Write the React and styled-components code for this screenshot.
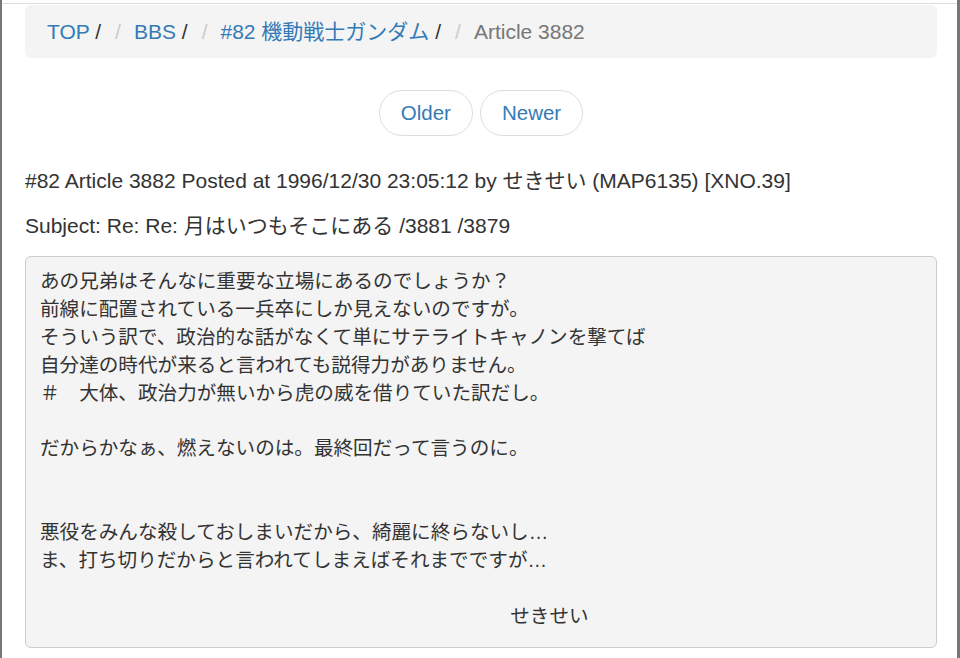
import React from "react";
import styled, {createGlobalStyle} from "styled-components";

const GlobalStyle = createGlobalStyle`
    html, body {
        margin: 0;
        padding: 0;
        background: #fff;
    }
    body {
        font-family: "Liberation Sans", Arial, "Noto Sans CJK JP", sans-serif;
        font-size: 21px;
        line-height: 1.42857;
        color: #333;
    }
`;

const Frame = styled("div")`
    height: 658px;
    box-sizing: border-box;
    border-left: 2px solid #777;
    border-right: 3px solid #777;
    overflow: hidden;
    padding: 3px 20px 0 23px;
`;

const TopRule = styled("div")`
    height: 1px;
    margin: 0 -20px 1px -23px;
    background: #ddd;
`;

const Breadcrumb = styled("ol")`
    display: flex;
    align-items: center;
    margin: 0 0 32px;
    padding: 12px 22px 11px;
    list-style: none;
    background: #f4f4f4;
    border-radius: 6px;
    font-size: 21px;
    line-height: 30px;

    & > li + li::before {
        content: "/";
        padding: 0 13px 0 14px;
        color: #ccc;
    }
`;

const Crumb = styled("li")`
    color: ${props => (props.active ? "#777" : "#333")};
`;

const CrumbLink = styled("a")`
    color: #337ab7;
    text-decoration: none;
`;

const Pager = styled("div")`
    display: flex;
    justify-content: center;
    gap: 7px;
    margin-bottom: 30px;
`;

const PagerButton = styled("a")`
    display: inline-block;
    box-sizing: border-box;
    height: 46px;
    padding: 0 21px;
    line-height: 44px;
    border: 1px solid #ddd;
    border-radius: 23px;
    background: #fff;
    color: #337ab7;
    font-size: 20.5px;
    text-decoration: none;
`;

const Line = styled("p")`
    margin: 0 0 15px;
    font-size: 21px;
    line-height: 30px;
`;

const Body = styled("pre")`
    margin: 0;
    padding: 11px 14px 16px;
    border: 1px solid #ccc;
    border-radius: 6px;
    background: #f4f4f4;
    color: #333;
    font-family: "Liberation Sans", "Noto Sans CJK JP", sans-serif;
    font-size: 19.6px;
    line-height: 27.9px;
    white-space: pre-wrap;
`;

const text = `あの兄弟はそんなに重要な立場にあるのでしょうか？
前線に配置されている一兵卒にしか見えないのですが。
そういう訳で、政治的な話がなくて単にサテライトキャノンを撃てば
自分達の時代が来ると言われても説得力がありません。
＃　大体、政治力が無いから虎の威を借りていた訳だし。

だからかなぁ、燃えないのは。最終回だって言うのに。


悪役をみんな殺しておしまいだから、綺麗に終らないし…
ま、打ち切りだからと言われてしまえばそれまでですが…

　　　　　　　　　　　　　　　　　　　　　　　　せきせい`;

export default function App() {
    return (
        <>
            <GlobalStyle/>
            <Frame>
                <TopRule/>
                <Breadcrumb>
                    <Crumb><CrumbLink href="#">TOP</CrumbLink> /</Crumb>
                    <Crumb><CrumbLink href="#">BBS</CrumbLink> /</Crumb>
                    <Crumb><CrumbLink href="#">#82 機動戦士ガンダム</CrumbLink> /</Crumb>
                    <Crumb active>Article 3882</Crumb>
                </Breadcrumb>
                <Pager>
                    <PagerButton href="#">Older</PagerButton>
                    <PagerButton href="#">Newer</PagerButton>
                </Pager>
                <Line>#82 Article 3882 Posted at 1996/12/30 23:05:12 by せきせい (MAP6135) [XNO.39]</Line>
                <Line>Subject: Re: Re: 月はいつもそこにある /3881 /3879</Line>
                <Body>{text}</Body>
            </Frame>
        </>
    );
}
